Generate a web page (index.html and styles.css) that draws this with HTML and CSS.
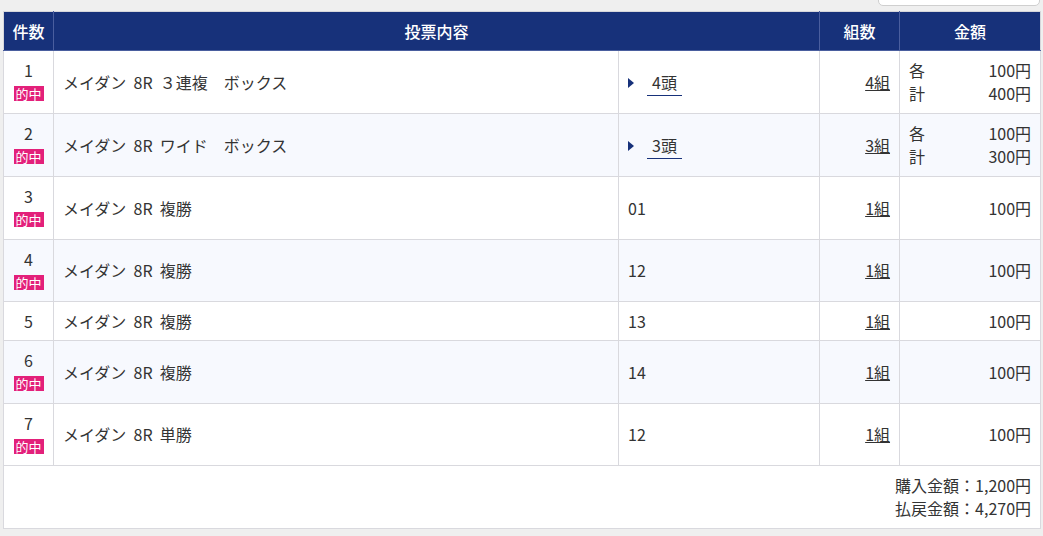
FILE: index.html
```html
<!DOCTYPE html>
<html lang="ja">
<head>
<meta charset="utf-8">
<link rel="stylesheet" href="styles.css">
</head>
<body>
<div class="page">
  <div class="toolbar"><div class="select"></div></div>
  <table class="bets">
    <colgroup>
      <col class="c-no"><col class="c-name"><col class="c-horse"><col class="c-sets"><col class="c-amt">
    </colgroup>
    <thead>
      <tr><th>件数</th><th colspan="2">投票内容</th><th>組数</th><th>金額</th></tr>
    </thead>
    <tbody>
      <tr>
        <td class="no">1<span class="hit">的中</span></td>
        <td>メイダン&nbsp;&nbsp;8R&nbsp;&nbsp;３連複　ボックス</td>
        <td><span class="tri"></span><a class="heads">4頭</a></td>
        <td class="sets"><a>4組</a></td>
        <td class="amt"><div class="line"><span>各</span><span>100円</span></div><div class="line"><span>計</span><span>400円</span></div></td>
      </tr>
      <tr class="alt">
        <td class="no">2<span class="hit">的中</span></td>
        <td>メイダン&nbsp;&nbsp;8R&nbsp;&nbsp;ワイド　ボックス</td>
        <td><span class="tri"></span><a class="heads">3頭</a></td>
        <td class="sets"><a>3組</a></td>
        <td class="amt"><div class="line"><span>各</span><span>100円</span></div><div class="line"><span>計</span><span>300円</span></div></td>
      </tr>
      <tr>
        <td class="no">3<span class="hit">的中</span></td>
        <td>メイダン&nbsp;&nbsp;8R&nbsp;&nbsp;複勝</td>
        <td>01</td>
        <td class="sets"><a>1組</a></td>
        <td class="amt">100円</td>
      </tr>
      <tr class="alt">
        <td class="no">4<span class="hit">的中</span></td>
        <td>メイダン&nbsp;&nbsp;8R&nbsp;&nbsp;複勝</td>
        <td>12</td>
        <td class="sets"><a>1組</a></td>
        <td class="amt">100円</td>
      </tr>
      <tr>
        <td class="no">5</td>
        <td>メイダン&nbsp;&nbsp;8R&nbsp;&nbsp;複勝</td>
        <td>13</td>
        <td class="sets"><a>1組</a></td>
        <td class="amt">100円</td>
      </tr>
      <tr class="alt">
        <td class="no">6<span class="hit">的中</span></td>
        <td>メイダン&nbsp;&nbsp;8R&nbsp;&nbsp;複勝</td>
        <td>14</td>
        <td class="sets"><a>1組</a></td>
        <td class="amt">100円</td>
      </tr>
      <tr>
        <td class="no">7<span class="hit">的中</span></td>
        <td>メイダン&nbsp;&nbsp;8R&nbsp;&nbsp;単勝</td>
        <td>12</td>
        <td class="sets"><a>1組</a></td>
        <td class="amt">100円</td>
      </tr>
    </tbody>
    <tfoot>
      <tr><td colspan="5" class="total">購入金額：1,200円<br>払戻金額：4,270円</td></tr>
    </tfoot>
  </table>
</div>
</body>
</html>
```
FILE: styles.css
```css
html, body {
  margin: 0;
  background: #efefef;
}
body {
  font-family: "Noto Sans CJK JP", "Noto Sans", sans-serif;
  font-size: 16px;
  color: #333;
}
.page {
  padding: 0 2px 0 3px;
}
.toolbar {
  display: flex;
  justify-content: flex-end;
  height: 11px;
}
.select {
  box-sizing: border-box;
  width: 162px;
  height: 30px;
  margin-top: -24px;
  margin-right: 1px;
  background: #fff;
  border: 1px solid #cfcfcf;
  border-radius: 5px;
}
.bets {
  width: 1038px;
  border-collapse: collapse;
  table-layout: fixed;
  background: #fff;
  border: 1px solid #d6d6db;
}
.c-no { width: 50px; }
.c-name { width: 565px; }
.c-horse { width: 201px; }
.c-sets { width: 80px; }
.c-amt { width: 141px; }
.bets th {
  background: #17317a;
  color: #fff;
  font-weight: 500;
  line-height: 22px;
  padding: 8px 2px;
  border: 1px solid #4a5e9e;
  border-top-color: #d6d6db;
  text-align: center;
  white-space: nowrap;
}
.bets th:first-child { border-left-color: #d6d6db; }
.bets th:last-child { border-right-color: #d6d6db; }
.bets td {
  border: 1px solid #d9d9de;
  padding: 8px 9px;
  line-height: 22px;
  vertical-align: middle;
  text-align: left;
}
.bets tr.alt td { background: #f7f9fe; }
.bets td.no {
  text-align: center;
  padding-left: 2px;
  padding-right: 2px;
}
.hit {
  display: block;
  width: 30px;
  margin: 5px auto 3.5px;
  background: #e3207a;
  color: #fff;
  font-size: 13px;
  line-height: 15px;
  text-align: center;
}
.tri {
  display: inline-block;
  width: 0;
  height: 0;
  border-top: 5px solid transparent;
  border-bottom: 5px solid transparent;
  border-left: 6px solid #17317a;
  margin-right: 13px;
  vertical-align: 1px;
}
.heads {
  display: inline-block;
  padding: 0 5px 3px;
  border-bottom: 1px solid #17317a;
  line-height: 20px;
  color: #333;
  margin-top: 3px;
}
.bets td.sets { text-align: right; }
.sets a {
  color: #333;
  text-decoration: underline;
}
.bets td.amt { text-align: right; }
.amt .line {
  display: flex;
  justify-content: space-between;
  line-height: 23px;
}
.bets td.total {
  text-align: right;
  line-height: 23px;
  background: #fff;
}
```
